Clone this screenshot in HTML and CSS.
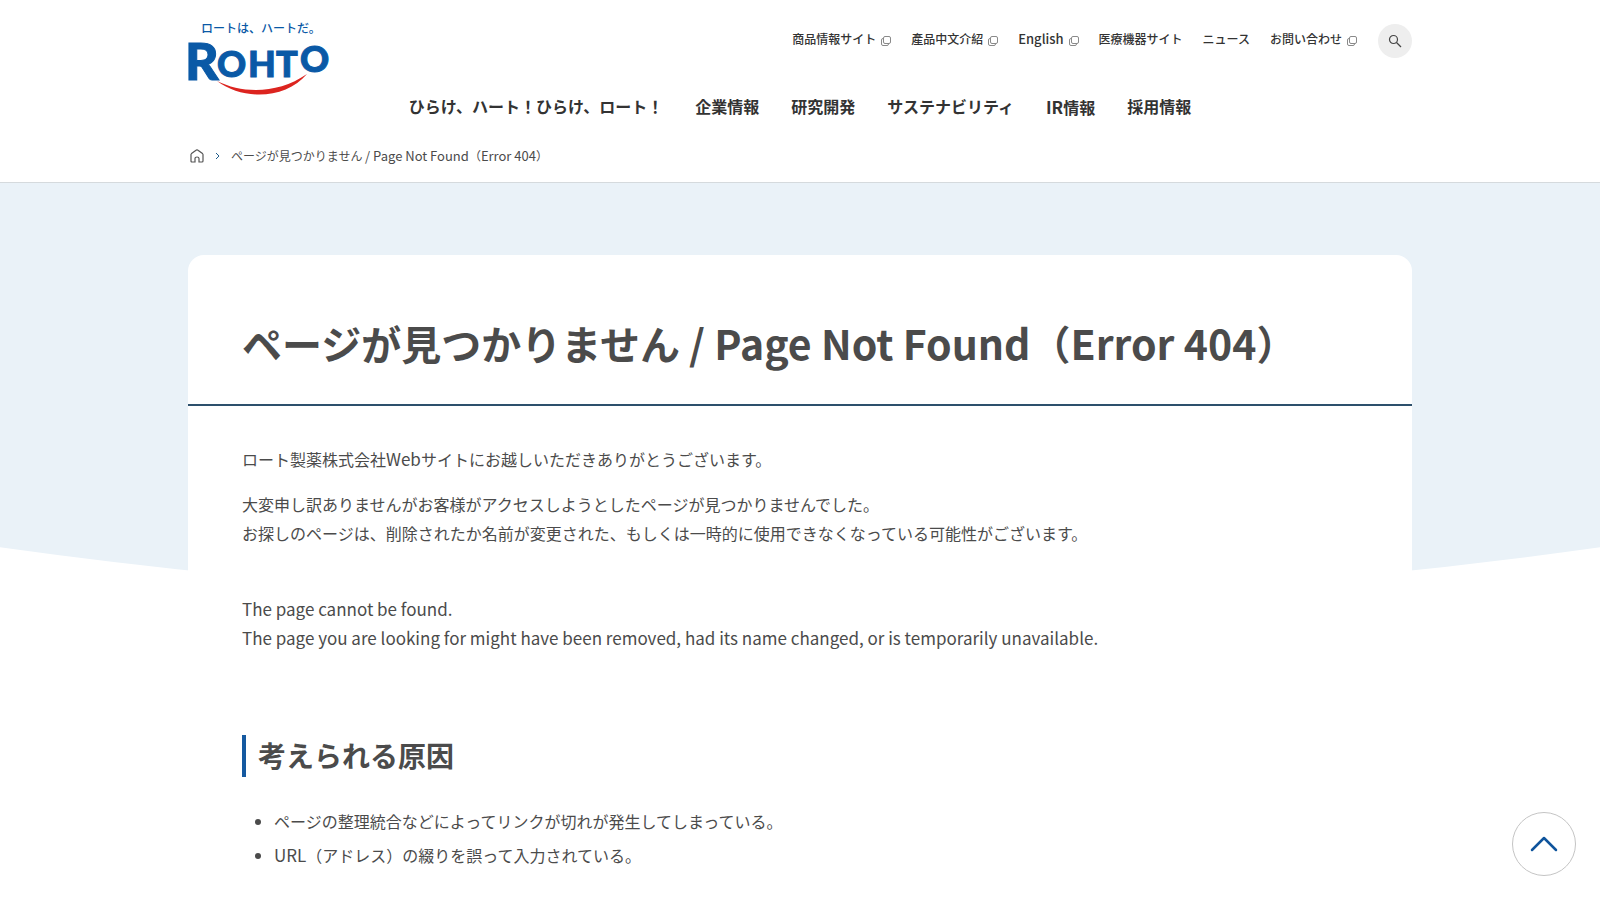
FILE: index.html
```
<!DOCTYPE html>
<html lang="ja">
<head>
    <meta charset="UTF-8">
    <meta name="viewport" content="width=device-width, initial-scale=1.0">
    <title>ページが見つかりません / Page Not Found（Error 404）</title>
    <link rel="stylesheet" href="styles.css">
</head>
<body>
    <!-- Shared icons -->
    <svg class="sprite" aria-hidden="true">
        <symbol id="icon-blank" viewBox="0 0 10 10">
            <path d="M4 .5h4a1.500 1.500 0 0 1 1.500 1.500v4a1.500 1.500 0 0 1-1.500 1.500h-4a1.500 1.500 0 0 1-1.500-1.500v-4a1.500 1.500 0 0 1 1.500-1.500zM2.500 2.500h-.5a1.500 1.500 0 0 0-1.500 1.500v4a1.500 1.500 0 0 0 1.500 1.500h4a1.500 1.500 0 0 0 1.500-1.500v-.5" fill="none" stroke="#8a8a8a"/>
        </symbol>
    </svg>

    <header class="header">
        <div class="inner header-top">
            <a class="logo" href="#" aria-label="ロート製薬">
                <svg width="150" height="76" viewBox="-6 0 150 76">
                    <g fill="#0a59a6" stroke="#0a59a6">
                        <text class="logo-copy" x="13" y="13">ロートは、ハートだ。</text>
                        <text class="logo-r" x="-3" y="60">R</text>
                        <text class="logo-s" x="29" y="57">O</text>
                        <text class="logo-s" x="60" y="57">H</text>
                        <text class="logo-s" x="88" y="57">T</text>
                        <text class="logo-s" x="112" y="52">O</text>
                    </g>
                    <path d="M29 61C55 74 90 74 119 54C98 79 56 81 29 61z" fill="#dc241f"/>
                </svg>
            </a>
            <ul class="sub-nav">
                <li><a href="#">商品情報サイト<svg class="blank"><use href="#icon-blank"/></svg></a></li>
                <li><a href="#" lang="zh-Hant">產品中文介紹<svg class="blank"><use href="#icon-blank"/></svg></a></li>
                <li><a href="#"><span class="en">English</span><svg class="blank"><use href="#icon-blank"/></svg></a></li>
                <li><a href="#">医療機器サイト</a></li>
                <li><a href="#">ニュース</a></li>
                <li><a href="#">お問い合わせ<svg class="blank"><use href="#icon-blank"/></svg></a></li>
            </ul>
            <button class="search-btn" type="button" aria-label="検索">
                <svg width="14" height="14" viewBox="0 0 14 14" fill="none" stroke="#444" stroke-width="1.200">
                    <circle cx="5.500" cy="5.500" r="4"/>
                    <path d="M8.500 8.500l4.500 4.500"/>
                </svg>
            </button>
        </div>
        <nav class="main-nav">
            <a href="#">ひらけ、ハート！ひらけ、ロート！</a>
            <a href="#">企業情報</a>
            <a href="#">研究開発</a>
            <a href="#">サステナビリティ</a>
            <a href="#"><span class="en">IR</span>情報</a>
            <a href="#">採用情報</a>
        </nav>
        <div class="inner breadcrumb">
            <a href="#" aria-label="ホーム">
                <svg width="14" height="14" viewBox="0 0 14 14" fill="none" stroke="#555" stroke-width="1.200">
                    <path d="M1 5.500Q1 5 1.500 4.600L6.400 1Q7 .6 7.600 1L12.500 4.600Q13 5 13 5.500V12Q13 13 12 13H9V9.500Q9 8 7 8T5 9.500V13H2Q1 13 1 12z"/>
                </svg>
            </a>
            <svg width="5" height="8" viewBox="0 0 5 8" fill="none" stroke="#1f5c8b"><path d="M1 1l3 3l-3 3"/></svg>
            <span>ページが見つかりません <span class="en">/ Page Not Found</span>（<span class="en">Error 404</span>）</span>
        </div>
    </header>

    <main class="main">
        <article class="card">
            <h1>ページが見つかりません <span class="en">/ Page Not Found</span>（<span class="en">Error 404</span>）</h1>
            <div class="content">
                <p>ロート製薬株式会社<span class="en">Web</span>サイトにお越しいただきありがとうございます。</p>
                <p>大変申し訳ありませんがお客様がアクセスしようとしたページが見つかりませんでした。<br>
                お探しのページは、削除されたか名前が変更された、もしくは一時的に使用できなくなっている可能性がございます。</p>
                <p class="message en">The page cannot be found.<br>
                The page you are looking for might have been removed, had its name changed, or is temporarily unavailable.</p>
                <h2>考えられる原因</h2>
                <ul class="causes">
                    <li>ページの整理統合などによってリンクが切れが発生してしまっている。</li>
                    <li><span class="en">URL</span>（アドレス）の綴りを誤って入力されている。</li>
                </ul>
            </div>
        </article>
    </main>

    <button class="page-top" type="button" aria-label="ページの先頭へ">
        <svg width="28" height="16" viewBox="0 0 28 16" fill="none" stroke="#0f549c" stroke-width="2.500" stroke-linecap="round" stroke-linejoin="round">
            <path d="M2 14L14 2L26 14"/>
        </svg>
    </button>
</body>
</html>
```
FILE: styles.css
```
* {
    box-sizing: border-box;
}

body {
    margin: 0;
    background-color: #ffffff;
    color: #4b4b4b;
    font-family: "Noto Sans CJK JP", sans-serif;
    font-size: 16px;
    line-height: 29px;
}

a {
    color: inherit;
    text-decoration: none;
}

button {
    padding: 0;
    cursor: pointer;
}

svg {
    display: block;
}

/* Latin text is set slightly larger than the Japanese */
.en {
    font-size: 17px;
}

.sprite {
    position: absolute;
    width: 0;
    height: 0;
}

.inner {
    max-width: 1224px;
    margin: 0 auto;
}

/* Header */
.header {
    border-bottom: 1px solid #d5dadd;
}

.header-top {
    display: flex;
    align-items: flex-start;
    height: 92px;
    padding-top: 20px;
}

.logo {
    margin-left: -6px;
}

.logo-copy {
    font-size: 12px;
    font-weight: 500;
    stroke: none;
}

.logo-r,
.logo-s {
    font-family: Lato, sans-serif;
    font-weight: 900;
}

.logo-r {
    font-size: 52px;
}

.logo-s {
    font-size: 36px;
}

.sub-nav {
    display: flex;
    gap: 20px;
    margin: 0 21px 0 auto;
    padding: 8px 0 0;
    list-style: none;
    color: #333333;
    font-size: 12px;
    font-weight: 500;
    line-height: 22px;
}

.sub-nav a {
    display: flex;
    align-items: center;
    gap: 5px;
}

.blank {
    width: 10px;
    height: 10px;
    margin-top: 4px;
}

.search-btn {
    display: grid;
    place-items: center;
    width: 34px;
    height: 34px;
    margin-top: 4px;
    border: none;
    border-radius: 50%;
    background-color: #eeeeee;
}

.main-nav {
    display: flex;
    justify-content: center;
    gap: 32px;
    color: #333333;
    font-weight: 700;
}

.breadcrumb {
    display: flex;
    align-items: center;
    gap: 11px;
    padding: 23px 2px 15px;
    font-size: 12px;
    line-height: 22px;
}

.sub-nav .en,
.breadcrumb .en {
    font-size: 13px;
}

/* Main */
.main {
    position: relative;
    padding: 72px 0 80px;
}

.main::before {
    content: "";
    position: absolute;
    top: 0;
    left: 0;
    z-index: -1;
    width: 100%;
    height: 420px;
    background-color: #eaf2f8;
    clip-path: circle(5770px at 50% calc(100% - 5770px));
}

.card {
    max-width: 1224px;
    margin: 0 auto;
    border-radius: 16px 16px 0 0;
    background-color: #ffffff;
}

h1 {
    margin: 0;
    padding: 52px 54px 26px;
    border-bottom: 2px solid #2d506c;
    font-size: 40px;
    line-height: 70px;
}

h1 .en {
    font-size: 41px;
}

.content {
    padding: 38px 54px 0;
}

.content p {
    margin: 0 0 16px;
}

.content .message {
    margin: 46px 0 83px;
}

h2 {
    margin: 0 0 30px;
    padding: 0 0 2px 12px;
    border-left: 4px solid #1559a0;
    font-size: 28px;
    line-height: 40px;
}

.causes {
    margin: 0;
    padding-left: 32px;
}

.causes li {
    margin-bottom: 4px;
}

/* Back to top */
.page-top {
    display: grid;
    place-items: center;
    position: fixed;
    right: 24px;
    bottom: 24px;
    width: 64px;
    height: 64px;
    border: 1px solid #c4c4c4;
    border-radius: 50%;
    background-color: #ffffff;
}
```
